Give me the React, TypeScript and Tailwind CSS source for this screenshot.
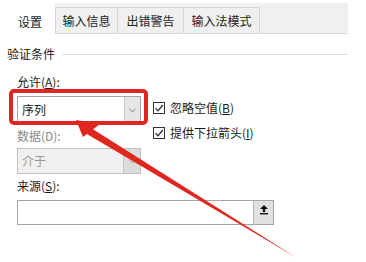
import { ChevronDown } from "lucide-react";

function Check({ label, hot }: { label: string; hot: string }) {
  return (
    <div className="flex items-center gap-[5px] h-[14px]">
      <div className="w-[12px] h-[12px] border border-[#333] bg-white flex items-center justify-center">
        <svg width="10" height="10" viewBox="0 0 10 10">
          <path d="M1.5 5.2 L4 7.8 L8.8 2" fill="none" stroke="#222" strokeWidth="1.2" />
        </svg>
      </div>
      <span className="text-[12px] leading-none text-[#1a1a1a]">
        {label}(<span className="underline">{hot}</span>)
      </span>
    </div>
  );
}

export default function App() {
  const tabs = [
    { name: "输入信息", w: "w-[63px]" },
    { name: "出错警告", w: "w-[66px]" },
    { name: "输入法模式", w: "w-[76px]" },
  ];

  return (
    <div className="relative w-[366px] h-[262px] bg-white overflow-hidden font-['Noto_Sans_CJK_SC',sans-serif] text-[#1a1a1a]">
      {/* tab strip */}
      <div className="flex w-[348px] pt-[3px]">
        <div className="w-[55px] h-[31px] flex items-end justify-center pb-[6px] pl-[5px]">
          <span className="text-[12px] leading-none">设置</span>
        </div>
        <div className="flex-1 h-[31px] bg-[#f0f0f0] border-b border-[#d9d9d9] flex items-end">
          {tabs.map((t, i) => (
            <div
              key={t.name}
              className={`${t.w} h-[26px] border-t border-r border-[#d4d4d4] ${i === 0 ? "border-l" : ""} flex items-center justify-center`}
            >
              <span className="text-[12px] leading-none text-[#222]">{t.name}</span>
            </div>
          ))}
        </div>
      </div>

      {/* group header */}
      <div className="flex items-center w-[348px] pl-[7px] mt-[14px]">
        <span className="text-[12px] leading-none">验证条件</span>
        <div className="flex-1 h-px bg-[#dcdcdc] ml-[7px]" />
      </div>

      <div className="pl-[17px] mt-[16px]">
        <div className="h-[12px] text-[12px] leading-none">
          允许(<span className="underline">A</span>):
        </div>

        <div className="flex mt-[8px]">
          <div className="w-[124px]">
            {/* allow combo */}
            <div className="h-[28px] border border-[#a5a5a5] bg-white flex">
              <div className="flex-1 flex items-center pl-[4px] text-[12px]">序列</div>
              <div className="w-[16px] bg-[#e6e6e6] border-l border-[#c8c8c8] flex items-center justify-center">
                <ChevronDown size={11} strokeWidth={1.5} className="text-[#555]" />
              </div>
            </div>

            <div className="h-[12px] text-[12px] leading-none text-[#8a8a8a] mt-[6px]">数据(D):</div>

            {/* data combo (disabled) */}
            <div className="h-[26px] border border-[#c2c2c2] bg-[#f0f0f0] flex mt-[6px]">
              <div className="flex-1 flex items-center pl-[4px] text-[12px] text-[#9a9a9a]">介于</div>
              <div className="w-[17px] bg-[#dcdcdc] border-l border-[#c2c2c2] flex items-center justify-center">
                <ChevronDown size={11} strokeWidth={1.5} className="text-[#777]" />
              </div>
            </div>
          </div>

          <div className="ml-[12px] pt-[5px] flex flex-col gap-[11px]">
            <Check label="忽略空值" hot="B" />
            <Check label="提供下拉箭头" hot="I" />
          </div>
        </div>

        <div className="h-[12px] text-[12px] leading-none mt-[6px]">
          来源(<span className="underline">S</span>):
        </div>

        <div className="w-[257px] h-[25px] border border-[#a5a5a5] bg-white flex mt-[8px]">
          <div className="flex-1" />
          <div className="w-[20px] bg-[#e1e1e1] border-l border-[#b5b5b5] flex items-start justify-center pt-[3px]">
            <svg width="10" height="11" viewBox="0 0 10 11">
              <path d="M5 1 L9 5 L6.2 5 L6.2 8 L3.8 8 L3.8 5 L1 5 Z" fill="#111" />
              <rect x="1" y="9" width="8" height="1.4" fill="#111" />
            </svg>
          </div>
        </div>
      </div>

      {/* red annotation */}
      <svg className="absolute inset-0 pointer-events-none" width="366" height="262" viewBox="0 0 366 262">
        <rect x="11" y="91" width="135" height="32" rx="3" fill="none" stroke="#e0271f" strokeWidth="4" />
        <path d="M297 258 L91 128 L86 133.5 Z" fill="#e0271f" />
        <path d="M76 120 L100 124 L83 137 Z" fill="#e0271f" />
      </svg>
    </div>
  );
}
